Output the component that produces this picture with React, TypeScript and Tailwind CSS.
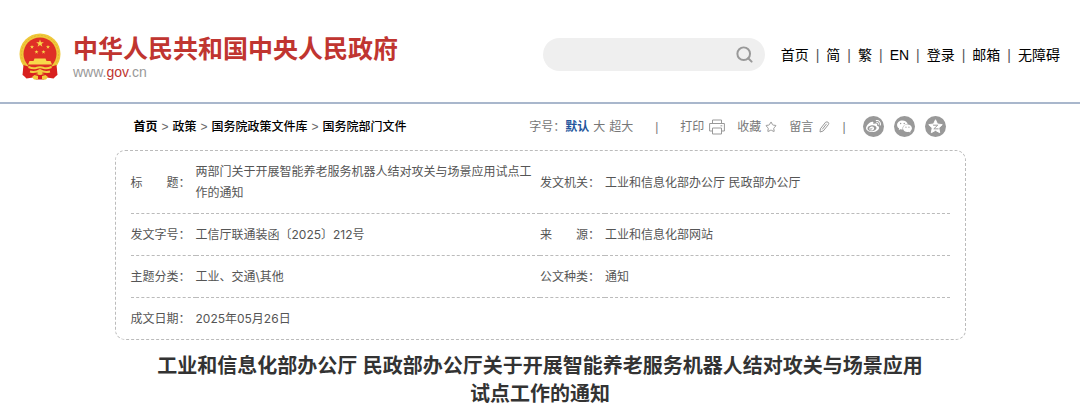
import { Fragment, useState } from "react";
import { Search, Star } from "lucide-react";
import { AiFillWechat } from "react-icons/ai";
import { FaWeibo } from "react-icons/fa";

const navItems = ["首页", "简", "繁", "EN", "登录", "邮箱", "无障碍"];
const crumbs = ["首页", "政策", "国务院政策文件库", "国务院部门文件"];
const fontSizes = ["默认", "大", "超大"];

const rows = [
  [
    { label: "标　　题：", value: "两部门关于开展智能养老服务机器人结对攻关与场景应用试点工作的通知" },
    { label: "发文机关：", value: "工业和信息化部办公厅 民政部办公厅" },
  ],
  [
    { label: "发文字号：", value: "工信厅联通装函〔2025〕212号" },
    { label: "来　　源：", value: "工业和信息化部网站" },
  ],
  [
    { label: "主题分类：", value: "工业、交通\\其他" },
    { label: "公文种类：", value: "通知" },
  ],
  [{ label: "成文日期：", value: "2025年05月26日" }],
];

const STAR = "M0 -5L1.2 -1.6L4.8 -1.6L1.9 0.6L3 4L0 1.9L-3 4L-1.9 0.6L-4.8 -1.6L-1.2 -1.6Z";

const Emblem = () => (
  <svg viewBox="0 0 84 94" className="h-[47px] w-[42px] shrink-0" aria-hidden="true">
    <path d="M11 58L8 84L15 91L28 89L34 93H50L56 89L69 91L76 84L73 58Z" fill="#d8201f" />
    <circle cx="42" cy="42" r="41" fill="#efc83a" />
    <circle cx="42" cy="42" r="37" fill="none" stroke="#dcae30" strokeWidth="1.5" strokeDasharray="4 3" />
    <circle cx="42" cy="42" r="33" fill="#df2f26" />
    <g fill="#f8d84a">
      <path d={STAR} transform="translate(42 21) scale(1.6)" />
      <path d={STAR} transform="translate(26 28) scale(.85)" />
      <path d={STAR} transform="translate(58 28) scale(.85)" />
      <path d={STAR} transform="translate(35 38) scale(.85)" />
      <path d={STAR} transform="translate(49 38) scale(.85)" />
      <path d="M31 51H53L55 56H63L66 63H18L21 56H29Z" />
    </g>
    <path d="M9 64Q24 70 32 67Q42 64 52 67Q60 70 75 64L77 84L66 88L57 81Q48 84 42 78Q36 84 27 81L18 88L7 84Z" fill="#d8201f" />
    <path
      d="M19 68Q28 72 34 70Q42 67 50 70Q56 72 65 68M22 77Q33 80 42 74Q51 80 62 77"
      fill="none"
      stroke="#f2cc3f"
      strokeWidth="4"
    />
    <path d="M26 88L31 84L38 86V93H30ZM58 88L53 84L46 86V93H54Z" fill="#f2cc3f" />
    <circle cx="42" cy="79" r="5" fill="#f2cc3f" />
  </svg>
);

const PrinterIcon = () => (
  <svg viewBox="0 0 16 16" className="size-4" fill="none" stroke="#999" aria-hidden="true">
    <path d="M3.5 4.5V1H12.5V4.5M3.5 12H.6V4.5H15.4V12H12.5M3.5 9H12.5V15H3.5ZM11.5 6.8H13.3" />
  </svg>
);

const PencilIcon = () => (
  <svg viewBox="0 0 12 12" className="size-3" fill="none" stroke="#999" aria-hidden="true">
    <path d="M2 11L2.4 7.8L7.6 1.2Q9 .4 10.3 1.4Q11.2 2.4 10.4 3.6L5.2 10ZM4.2 8.4L8.6 2.8" />
  </svg>
);

const QzoneIcon = () => (
  <svg viewBox="0 0 16 16" className="size-[15px]" aria-hidden="true">
    <path
      d="M8 .8L10.1 5.3L15.2 6L11.5 9.5L12.5 14.6L8 12.1L3.5 14.6L4.5 9.5L.8 6L5.9 5.3Z"
      fill="white"
      stroke="white"
      strokeLinejoin="round"
    />
    <path d="M5.4 6.6H10.4L6.2 10.5H11.2" fill="none" stroke="#999" strokeWidth="1" />
  </svg>
);

const shareLinks = [
  { name: "微博", icon: <FaWeibo className="size-[15px]" /> },
  { name: "微信", icon: <AiFillWechat className="size-[17px]" /> },
  { name: "QQ空间", icon: <QzoneIcon /> },
];

const Header = () => (
  <header className="flex items-center justify-between border-b-2 border-[#a9b7cc] pt-[33px] pr-5 pb-[22px] pl-[19px]">
    <a href="#" className="flex items-center gap-3">
      <Emblem />
      <span className="flex flex-col">
        <span className="text-[25px] leading-[30px] font-bold text-[#c03530]">中华人民共和国中央人民政府</span>
        <span className="text-sm leading-4 text-[#999]">
          www.<span className="text-[#c03530]">gov</span>.cn
        </span>
      </span>
    </a>
    <div className="flex items-center gap-4 pb-1">
      <form className="flex h-[33px] w-[222px] items-center rounded-full bg-[#efefef] pr-[11px] pl-4">
        <input type="search" aria-label="搜索" className="w-full min-w-0 bg-transparent text-sm outline-none" />
        <button type="button" aria-label="搜索" className="shrink-0">
          <Search className="size-[19px] text-[#999]" strokeWidth={2.5} />
        </button>
      </form>
      <nav className="flex items-center gap-[7px] text-[14px] leading-5 whitespace-nowrap text-black">
        {navItems.map((item, i) => (
          <Fragment key={item}>
            {i > 0 && <span className="text-[#555]">|</span>}
            <a href="#">{item}</a>
          </Fragment>
        ))}
      </nav>
    </div>
  </header>
);

const Toolbar = () => {
  const [size, setSize] = useState("默认");

  return (
    <div className="flex items-center justify-between pr-5 pl-[19px] text-xs whitespace-nowrap">
      <nav aria-label="当前位置" className="flex gap-1 text-black">
        {crumbs.map((crumb, i) => (
          <Fragment key={crumb}>
            {i > 0 && <span className="text-[#666]">&gt;</span>}
            <a href="#" className={i === 0 ? "font-bold" : "font-medium"}>
              {crumb}
            </a>
          </Fragment>
        ))}
      </nav>
      <div className="flex items-center text-[#777]">
        <span>字号：</span>
        <div className="flex gap-1">
          {fontSizes.map((s) => (
            <button
              key={s}
              type="button"
              onClick={() => setSize(s)}
              className={s === size ? "font-bold text-[#24549c]" : ""}>
              {s}
            </button>
          ))}
        </div>
        <span className="px-[22px]">|</span>
        <div className="flex items-center gap-3">
          <button type="button" className="flex items-center gap-[5px]">
            打印
            <PrinterIcon />
          </button>
          <button type="button" className="flex items-center gap-1">
            收藏
            <Star className="size-3 text-[#999]" strokeWidth={2} />
          </button>
          <button type="button" className="flex items-center gap-[5px]">
            留言
            <PencilIcon />
          </button>
          <span>|</span>
        </div>
        <div className="ml-[17px] flex gap-[10px]">
          {shareLinks.map(({ name, icon }) => (
            <a
              key={name}
              href="#"
              aria-label={name}
              className="flex size-[21px] items-center justify-center rounded-full bg-[#999] text-white">
              {icon}
            </a>
          ))}
        </div>
      </div>
    </div>
  );
};

const InfoTable = () => (
  <div className="mt-[13px] rounded-[10px] border border-dashed border-[#bbb] px-[15px]">
    <table className="w-full table-fixed border-separate border-spacing-0 text-left font-['Inter','Noto_Sans_CJK_SC',sans-serif] text-xs leading-[21px] text-[#555]">
      <colgroup>
        <col className="w-[65px]" />
        <col />
        <col className="w-[65px]" />
        <col />
      </colgroup>
      <tbody>
        {rows.map((row, i) => {
          const line = i < rows.length - 1 ? "border-b border-dashed border-[#bbb]" : "";
          return (
            <tr key={row[0].label}>
              {row.map(({ label, value }) => (
                <Fragment key={label}>
                  <th scope="row" className={`font-normal whitespace-nowrap ${line}`}>
                    {label}
                  </th>
                  <td colSpan={row.length === 1 ? 3 : 1} className={`py-[10px] pr-2 ${line}`}>
                    {value}
                  </td>
                </Fragment>
              ))}
            </tr>
          );
        })}
      </tbody>
    </table>
  </div>
);

export default function App() {
  return (
    <div lang="zh-CN" className="bg-white font-['Liberation_Sans','Noto_Sans_CJK_SC',sans-serif]">
      <Header />
      <main className="mx-auto max-w-[851px] pt-3">
        <Toolbar />
        <InfoTable />
        <h1 className="px-8 pt-3 text-center text-[20px] leading-7 font-bold text-[#333]">
          工业和信息化部办公厅 民政部办公厅关于开展智能养老服务机器人结对攻关与场景应用
          <br />
          试点工作的通知
        </h1>
      </main>
    </div>
  );
}
